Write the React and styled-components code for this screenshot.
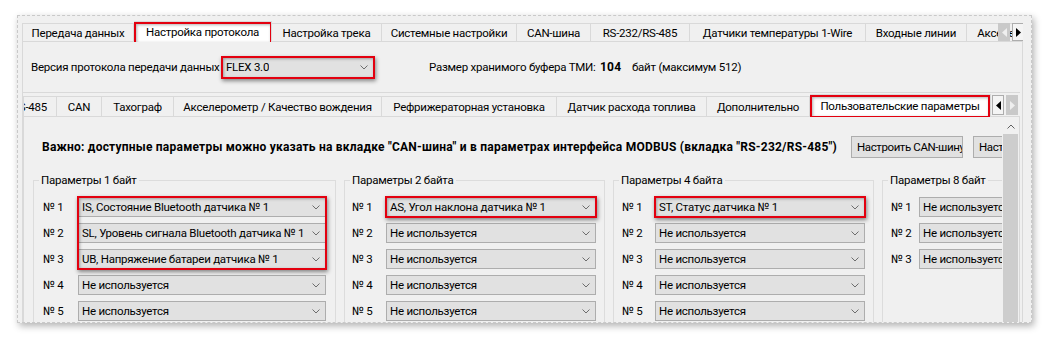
import React from "react";
import styled, { createGlobalStyle, css } from "styled-components";

const GlobalStyle = createGlobalStyle`
  html, body { margin: 0; padding: 0; background: #fff; }
  body {
    font-family: Roboto, "Liberation Sans", Arial, sans-serif;
    font-size: 11.5px;
    letter-spacing: -0.25px;
    color: #000;
  }
  * { box-sizing: border-box; }
`;

// red annotation frame drawn over a marked element
const redFrame = css`
  &::after {
    content: "";
    position: absolute;
    inset: ${(p) => p.$inset || "-2px"};
    border: 2px solid #e3000f;
    box-shadow: 1px 2px 4px rgba(0, 0, 0, 0.45), inset 1px 1px 3px rgba(0, 0, 0, 0.3);
    pointer-events: none;
    z-index: 3;
  }
`;

const Page = styled.div`
  width: 1049px;
  height: 337px;
  overflow: hidden;
  padding: 15px 0 0 17px;
`;

const Paper = styled.div`
  width: 1015px;
  height: 308px;
  background: #f0f0f0;
  border: 1px dashed #c9c9c9;
  box-shadow: 2px 3px 7px rgba(0, 0, 0, 0.3);
  padding: 5px 8px 0 4px;
  overflow: hidden;
  display: flex;
  flex-direction: column;
`;

const TabBar = styled.div`
  position: relative;
  display: flex;
  align-items: flex-end;
  flex: none;
  height: ${(p) => p.$h}px;
  overflow: hidden;
  background: linear-gradient(#d9d9d9, #d9d9d9) left bottom / 100% 1px no-repeat;
`;

const Tab = styled.div`
  position: relative;
  flex: none;
  width: ${(p) => p.$w}px;
  height: ${(p) => (p.$active ? p.$h : p.$h - 3)}px;
  margin-bottom: ${(p) => (p.$active ? 0 : 1)}px;
  display: flex;
  align-items: center;
  justify-content: ${(p) => (p.$end ? "flex-end" : "center")};
  padding: ${(p) => (p.$end ? "0 9px 0 0" : "0 2px")};
  white-space: nowrap;
  overflow: hidden;
  background: ${(p) => (p.$active ? "#fff" : "#f0f0f0")};
  border-top: 1px solid #d9d9d9;
  border-right: 1px solid #d9d9d9;
  &:first-child { border-left: 1px solid #d9d9d9; }
  ${(p) => p.$active && redFrame}
`;

const ArrowGroup = styled.div`
  position: absolute;
  right: ${(p) => p.$right}px;
  top: ${(p) => p.$top}px;
  display: flex;
  gap: 2px;
  z-index: 4;
`;

const ArrowBtn = styled.div`
  flex: none;
  width: 12px;
  height: ${(p) => p.$h}px;
  display: flex;
  align-items: center;
  justify-content: center;
  background: ${(p) => (p.$off ? "#c9c9c9" : "#f4f4f4")};
  border: 1px solid ${(p) => (p.$off ? "#c9c9c9" : "#adadad")};
  color: ${(p) => (p.$off ? "#efefef" : "#000")};
`;

const Pane = styled.div`
  flex: 1;
  display: flex;
  flex-direction: column;
  border-left: 1px solid #d9d9d9;
  border-right: 1px solid #d9d9d9;
  min-height: 0;
`;

const VersionRow = styled.div`
  display: flex;
  align-items: center;
  height: 22px;
  margin-top: 14px;
  padding-left: 8px;
  white-space: nowrap;
`;

const Label = styled.span`
  flex: none;
  width: ${(p) => (p.$w ? `${p.$w}px` : "auto")};
  font-size: ${(p) => (p.$bold ? "12px" : "inherit")};
  font-weight: ${(p) => (p.$bold ? 700 : 400)};
  letter-spacing: ${(p) => (p.$bold ? "0.22px" : "inherit")};
`;

const Combo = styled.div`
  position: relative;
  display: flex;
  align-items: center;
  justify-content: space-between;
  width: ${(p) => (p.$w ? `${p.$w}px` : "auto")};
  height: ${(p) => p.$h || 20}px;
  margin-right: ${(p) => p.$mr || 0}px;
  padding: 0 5px 0 3px;
  background: #e1e1e1;
  border: 1px solid #adadad;
  white-space: nowrap;
  overflow: ${(p) => (p.$marked ? "visible" : "hidden")};
  ${(p) => p.$marked && redFrame}
  span { overflow: hidden; }
  svg { flex: none; margin-left: 6px; }
`;

const InnerWidget = styled.div`
  flex: 1;
  display: flex;
  flex-direction: column;
  margin: 14px 2px 0 0;
  padding-top: 1px;
  border-top: 1px solid #d9d9d9;
  min-height: 0;
`;

const InnerPane = styled.div`
  flex: 1;
  display: flex;
  padding-top: 1px;
  border-left: 1px solid #d9d9d9;
  border-right: 1px solid #d9d9d9;
  min-height: 0;
`;

const ScrollContent = styled.div`
  flex: 1;
  overflow: hidden;
  padding: 18px 0 0 18px;
`;

const NoticeRow = styled.div`
  display: flex;
  align-items: center;
  height: 22px;
  white-space: nowrap;
`;

const Button = styled.div`
  flex: none;
  height: 22px;
  width: ${(p) => p.$w}px;
  margin-left: ${(p) => p.$ml}px;
  display: flex;
  align-items: center;
  padding: 0 4px 0 5px;
  letter-spacing: -0.4px;
  background: #e1e1e1;
  border: 1px solid #adadad;
  overflow: hidden;
`;

const GroupsRow = styled.div`
  display: flex;
  align-items: flex-start;
  gap: 8px;
  margin: 15px 0 0 -9px;
`;

const Group = styled.fieldset`
  flex: none;
  width: ${(p) => p.$w}px;
  min-height: 200px;
  margin: 0;
  min-width: 0;
  padding: 10px ${(p) => p.$pr}px 0 5px;
  border: 1px solid #dcdcdc;
`;

const Legend = styled.legend`
  padding: 0 2px;
  line-height: 14px;
  white-space: nowrap;
`;

const Grid = styled.div`
  display: grid;
  grid-template-columns: ${(p) => p.$lw}px 1fr;
  grid-auto-rows: 20px;
  row-gap: 6px;
  margin-left: ${(p) => p.$ml}px;
`;

const RowLabel = styled.div`
  grid-column: 1;
  display: flex;
  align-items: center;
  justify-content: flex-start;
  white-space: nowrap;
`;

const Mark = styled.div`
  grid-column: 2;
  grid-row: ${(p) => p.$rows};
  margin: -1px;
  border: 2px solid #e3000f;
  box-shadow: 1px 2px 4px rgba(0, 0, 0, 0.45), inset 1px 1px 3px rgba(0, 0, 0, 0.3);
  pointer-events: none;
  z-index: 2;
`;

const ScrollBar = styled.div`
  flex: none;
  width: 17px;
  display: flex;
  flex-direction: column;
  background: #f0f0f0;
`;

const ScrollUp = styled.div`
  height: 16px;
  display: flex;
  align-items: center;
  justify-content: center;
`;

const Thumb = styled.div`
  flex: 1;
  margin: 0 1px;
  background: #cdcdcd;
`;

const Chevron = ({ up }) => (
  <svg width="8" height="5" viewBox="0 0 8 5">
    <polyline
      points={up ? "0.5,4.5 4,1 7.5,4.5" : "0.5,0.5 4,4 7.5,0.5"}
      fill="none"
      stroke={up ? "#606060" : "#6d6d6d"}
      strokeWidth="1"
    />
  </svg>
);

const Tri = ({ dir }) => (
  <svg width="5" height="9" viewBox="0 0 5 9">
    <polygon points={dir === "left" ? "5,0 0,4.5 5,9" : "0,0 5,4.5 0,9"} fill="currentColor" />
  </svg>
);

const outerTabs = [
  ["Передача данных", 112],
  ["Настройка протокола", 138, true],
  ["Настройка трека", 110],
  ["Системные настройки", 135],
  ["CAN-шина", 74],
  ["RS-232/RS-485", 99],
  ["Датчики температуры 1-Wire", 176],
  ["Входные линии", 101],
  ["Акселерометр / Качество вождения", 210],
];

const innerTabs = [
  ["RS-232/RS-485", 34, false, true],
  ["CAN", 45],
  ["Тахограф", 72],
  ["Акселерометр / Качество вождения", 208],
  ["Рефрижераторная установка", 175],
  ["Датчик расхода топлива", 150],
  ["Дополнительно", 103],
  ["Пользовательские параметры", 181, true],
];

const NONE = "Не используется";

const groups = [
  {
    title: "Параметры 1 байт", w: 303, pr: 9, ml: 4, lw: 35, mark: "1 / 4",
    items: [
      "IS, Состояние Bluetooth датчика № 1",
      "SL, Уровень сигнала Bluetooth датчика № 1",
      "UB, Напряжение батареи датчика № 1",
      NONE, NONE,
    ],
  },
  {
    title: "Параметры 2 байта", w: 261, pr: 8, ml: 2, lw: 34, mark: "1 / 2",
    items: ["AS, Угол наклона датчика № 1", NONE, NONE, NONE, NONE],
  },
  {
    title: "Параметры 4 байта", w: 261, pr: 8, ml: 3, lw: 33, mark: "1 / 2",
    items: ["ST, Статус датчика № 1", NONE, NONE, NONE, NONE],
  },
  {
    title: "Параметры 8 байт", w: 261, pr: 8, ml: 3, lw: 28,
    items: [NONE, NONE, NONE],
  },
];

export default function App() {
  return (
    <Page>
      <GlobalStyle />
      <Paper>
        <TabBar $h={21}>
          {outerTabs.map(([label, w, active]) => (
            <Tab key={label} $w={w} $h={21} $active={active} $inset="0 -1px -2px 0">
              {label}
            </Tab>
          ))}
          <ArrowGroup $right={-1} $top={2}>
            <ArrowBtn $h={18} $off><Tri dir="left" /></ArrowBtn>
            <ArrowBtn $h={18}><Tri dir="right" /></ArrowBtn>
          </ArrowGroup>
        </TabBar>

        <Pane>
          <VersionRow>
            <Label $w={191}>Версия протокола передачи данных</Label>
            <Combo $w={152} $h={21} $mr={55} $marked>
              <span>FLEX 3.0</span>
              <Chevron />
            </Combo>
            <Label $w={171}>Размер хранимого буфера ТМИ:</Label>
            <Label $bold $w={32}>104</Label>
            <Label>байт (максимум 512)</Label>
          </VersionRow>

          <InnerWidget>
            <TabBar $h={23}>
              {innerTabs.map(([label, w, active, end]) => (
                <Tab key={label + w} $w={w} $h={23} $active={active} $end={end} $inset="0 0 -1px 0">
                  {label}
                </Tab>
              ))}
              <ArrowGroup $right={2} $top={1}>
                <ArrowBtn $h={20}><Tri dir="left" /></ArrowBtn>
                <ArrowBtn $h={20} $off><Tri dir="right" /></ArrowBtn>
              </ArrowGroup>
            </TabBar>

            <InnerPane>
              <ScrollContent>
                <NoticeRow>
                  <Label $bold $w={801}>
                    Важно: доступные параметры можно указать на вкладке "CAN-шина" и в параметрах интерфейса MODBUS (вкладка "RS-232/RS-485")
                  </Label>
                  <Button $w={112} $ml={8}>Настроить CAN-шину</Button>
                  <Button $w={112} $ml={10}>Настроить MODBUS</Button>
                </NoticeRow>

                <GroupsRow>
                  {groups.map((g) => (
                    <Group key={g.title} $w={g.w} $pr={g.pr}>
                      <Legend>{g.title}</Legend>
                      <Grid $lw={g.lw} $ml={g.ml}>
                        {g.items.map((item, i) => (
                          <React.Fragment key={i}>
                            <RowLabel style={{ gridRow: i + 1 }}>№ {i + 1}</RowLabel>
                            <Combo style={{ gridRow: i + 1, gridColumn: 2 }}>
                              <span>{item}</span>
                              <Chevron />
                            </Combo>
                          </React.Fragment>
                        ))}
                        {g.mark && <Mark $rows={g.mark} />}
                      </Grid>
                    </Group>
                  ))}
                </GroupsRow>
              </ScrollContent>
              <ScrollBar>
                <ScrollUp><Chevron up /></ScrollUp>
                <Thumb />
              </ScrollBar>
            </InnerPane>
          </InnerWidget>
        </Pane>
      </Paper>
    </Page>
  );
}
